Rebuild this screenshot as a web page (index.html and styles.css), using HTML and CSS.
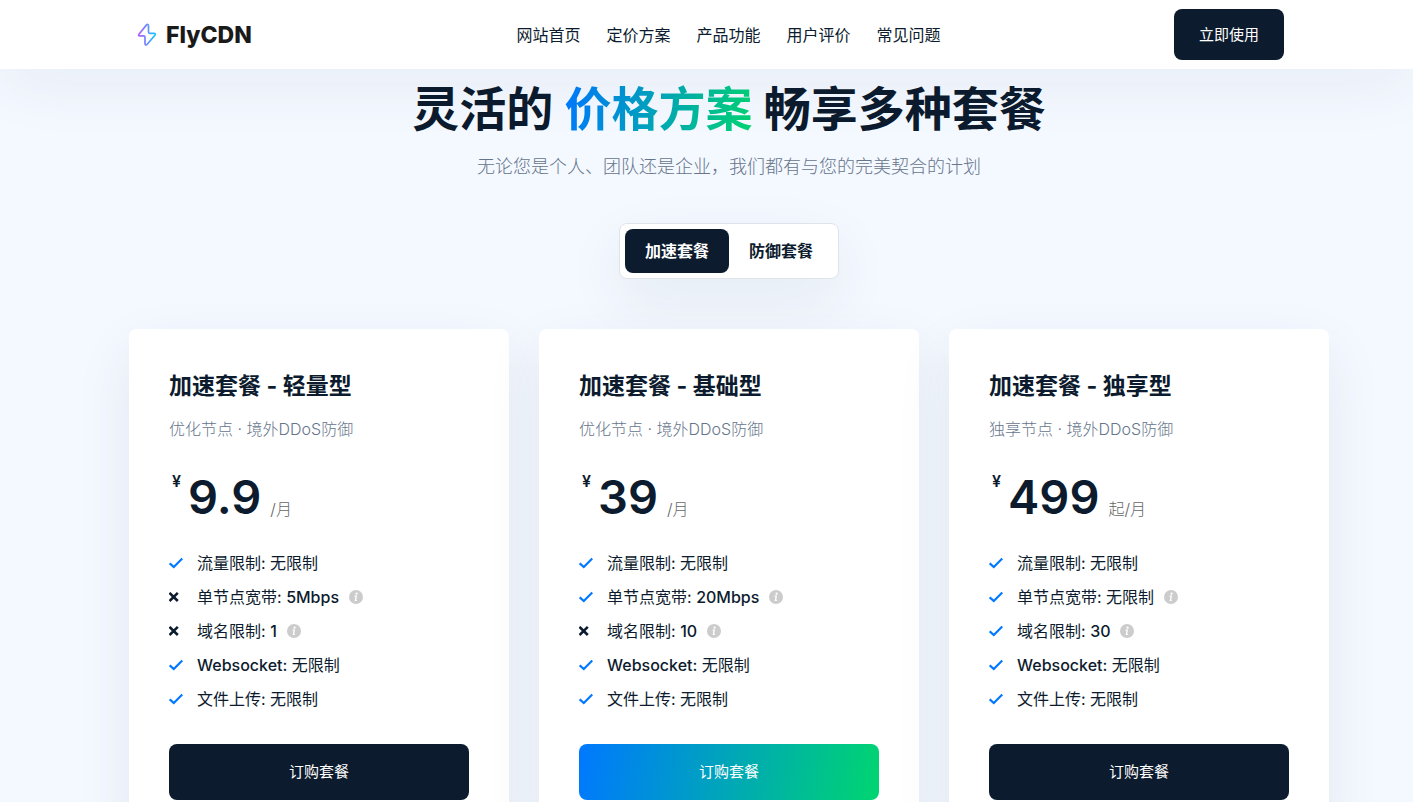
FILE: index.html
```html
<!DOCTYPE html>
<html lang="zh-CN">
<head>
<meta charset="utf-8">
<meta name="viewport" content="width=device-width, initial-scale=1">
<title>FlyCDN</title>
<link rel="stylesheet" href="styles.css">
</head>
<body>
<svg class="sprite" aria-hidden="true">
  <symbol id="check" viewBox="0 0 14 14"><path d="M.7 7.300 4.800 11 13.300 2.500" fill="none" stroke="currentColor" stroke-width="2.200"/></symbol>
  <symbol id="cross" viewBox="0 0 14 14"><path d="M.5 2.800 8.800 11M8.800 2.800.5 11" fill="none" stroke="currentColor" stroke-width="2.600"/></symbol>
  <symbol id="info" viewBox="0 0 14 14"><circle cx="7" cy="7" r="7" fill="#ccc"/><circle cx="7.600" cy="3.700" r="1.100" fill="#fff"/><path d="M5.600 6.100h1.700L6.400 10.400h1.500" fill="none" stroke="#fff" stroke-width="1.300"/></symbol>
</svg>
<header class="header">
  <a class="logo" href="#">
    <svg class="logo-mark" viewBox="0 0 20 24" aria-hidden="true">
      <defs><linearGradient id="bolt" x1="0" y1="0" x2="1" y2="0"><stop offset="0" stop-color="#b45cff"/><stop offset=".5" stop-color="#6b8cff"/><stop offset="1" stop-color="#10c8ff"/></linearGradient></defs>
      <path d="M9.3 2.1 2 11.2C1.3 12.200 1.500 12.900 2.700 12.900H6.600C7.600 12.900 8 13.300 8 14.200V20.500C8 22.300 9.200 22.500 10.200 21.300L17.900 12.200C18.600 11.200 18.200 10.300 17 10.300H12.800C11.900 10.300 11.500 9.900 11.500 9V2.900C11.500 1.300 10.300 1 9.300 2.100Z" fill="none" stroke="url(#bolt)" stroke-width="1.700"/>
    </svg>
    <span>FlyCDN</span>
  </a>
  <nav class="nav">
    <a href="#">网站首页</a>
    <a href="#">定价方案</a>
    <a href="#">产品功能</a>
    <a href="#">用户评价</a>
    <a href="#">常见问题</a>
  </nav>
  <div class="header-action"><a class="button start" href="#">立即使用</a></div>
</header>
<main class="pricing">
  <h1 class="title">灵活的 <span class="accent">价格方案</span> 畅享多种套餐</h1>
  <p class="lead">无论您是个人、团队还是企业，我们都有与您的完美契合的计划</p>
  <div class="tabs">
    <button class="tab active" type="button">加速套餐</button>
    <button class="tab" type="button">防御套餐</button>
  </div>
  <div class="plans">
    <section class="card">
      <h2 class="name">加速套餐 - 轻量型</h2>
      <p class="desc">优化节点 · 境外DDoS防御</p>
      <p class="price"><span class="currency">¥</span><span class="amount">9.9</span><span class="period">/月</span></p>
      <ul class="features">
        <li><svg class="icon yes"><use href="#check"/></svg><span>流量限制: 无限制</span></li>
        <li><svg class="icon"><use href="#cross"/></svg><span>单节点宽带: <b>5Mbps</b></span><svg class="icon info"><use href="#info"/></svg></li>
        <li><svg class="icon"><use href="#cross"/></svg><span>域名限制: <b>1</b></span><svg class="icon info"><use href="#info"/></svg></li>
        <li><svg class="icon yes"><use href="#check"/></svg><span><b>Websocket:</b> 无限制</span></li>
        <li><svg class="icon yes"><use href="#check"/></svg><span>文件上传: 无限制</span></li>
      </ul>
      <a class="button order" href="#">订购套餐</a>
    </section>
    <section class="card">
      <h2 class="name">加速套餐 - 基础型</h2>
      <p class="desc">优化节点 · 境外DDoS防御</p>
      <p class="price"><span class="currency">¥</span><span class="amount">39</span><span class="period">/月</span></p>
      <ul class="features">
        <li><svg class="icon yes"><use href="#check"/></svg><span>流量限制: 无限制</span></li>
        <li><svg class="icon yes"><use href="#check"/></svg><span>单节点宽带: <b>20Mbps</b></span><svg class="icon info"><use href="#info"/></svg></li>
        <li><svg class="icon"><use href="#cross"/></svg><span>域名限制: <b>10</b></span><svg class="icon info"><use href="#info"/></svg></li>
        <li><svg class="icon yes"><use href="#check"/></svg><span><b>Websocket:</b> 无限制</span></li>
        <li><svg class="icon yes"><use href="#check"/></svg><span>文件上传: 无限制</span></li>
      </ul>
      <a class="button order featured" href="#">订购套餐</a>
    </section>
    <section class="card">
      <h2 class="name">加速套餐 - 独享型</h2>
      <p class="desc">独享节点 · 境外DDoS防御</p>
      <p class="price"><span class="currency">¥</span><span class="amount">499</span><span class="period">起/月</span></p>
      <ul class="features">
        <li><svg class="icon yes"><use href="#check"/></svg><span>流量限制: 无限制</span></li>
        <li><svg class="icon yes"><use href="#check"/></svg><span>单节点宽带: 无限制</span><svg class="icon info"><use href="#info"/></svg></li>
        <li><svg class="icon yes"><use href="#check"/></svg><span>域名限制: <b>30</b></span><svg class="icon info"><use href="#info"/></svg></li>
        <li><svg class="icon yes"><use href="#check"/></svg><span><b>Websocket:</b> 无限制</span></li>
        <li><svg class="icon yes"><use href="#check"/></svg><span>文件上传: 无限制</span></li>
      </ul>
      <a class="button order" href="#">订购套餐</a>
    </section>
  </div>
</main>
</body>
</html>
```
FILE: styles.css
```css
:root {
  --ink: #0c1b2d;
  --muted: #66758c;
  --blue: #0078ff;
  --gradient: linear-gradient(100deg, #0078ff, #00d570);
  --shadow: 0 20px 60px rgba(12, 60, 90, 0.07);
}

* { box-sizing: border-box; }

body {
  margin: 0;
  background: #f4f8ff;
  color: var(--ink);
  font: 400 16px/24px Inter, "Noto Sans CJK SC", sans-serif;
}

h1, h2, p, ul { margin: 0; padding: 0; }
a { color: inherit; text-decoration: none; }
.sprite { display: none; }

.header {
  position: sticky;
  top: 0;
  z-index: 2;
  display: grid;
  grid-template-columns: 1fr auto 1fr;
  align-items: center;
  padding: 9px 129px 9px 137px;
  background: #fff;
  box-shadow: 0 20px 60px rgba(12, 60, 90, 0.05);
}

.logo {
  display: flex;
  align-items: center;
  gap: 9px;
  color: #1a1a1a;
  font-size: 23px;
  font-weight: 800;
}

.logo-mark { width: 20px; height: 24px; }
.nav { display: flex; gap: 26px; padding-left: 36px; }
.header-action { display: flex; justify-content: flex-end; }

.button {
  display: block;
  border-radius: 8px;
  background: var(--ink);
  color: #fff;
  font-size: 15px;
  text-align: center;
}

.start { padding: 14px 25px 13px; }
.order { padding: 16px; }
.featured { background: var(--gradient); }

.pricing {
  display: flex;
  flex-direction: column;
  align-items: center;
  padding: 10px 84px 60px 129px;
}

.title { font-size: 47px; font-weight: 700; line-height: 60px; }

.accent {
  background: var(--gradient);
  background-clip: text;
  -webkit-background-clip: text;
  color: transparent;
}

.lead {
  margin-top: 14px;
  color: var(--muted);
  font-size: 18px;
  font-weight: 300;
  line-height: 28px;
}

.tabs {
  display: flex;
  margin-top: 42px;
  padding: 5px;
  border: 1px solid #dfe4ea;
  border-radius: 8px;
  background: #fff;
  box-shadow: var(--shadow);
}

.tab {
  padding: 10px 20px;
  border: 0;
  border-radius: 8px;
  background: none;
  color: inherit;
  font: inherit;
  font-weight: 700;
}

.tab.active { background: var(--ink); color: #fff; }

.plans {
  display: grid;
  grid-template-columns: repeat(3, 1fr);
  gap: 30px;
  align-self: stretch;
  margin-top: 50px;
}

.card {
  padding: 40px;
  border-radius: 8px;
  background: #fff;
  box-shadow: var(--shadow);
}

.name { font-size: 23px; font-weight: 700; line-height: 34px; }
.desc { margin-top: 14px; color: var(--muted); font-weight: 300; }

.price { display: flex; margin-top: 28px; line-height: 56px; }
.currency { padding-left: 3px; font-weight: 600; line-height: 24px; }
.amount { margin-left: 7px; font-size: 47px; font-weight: 600; }
.period { align-self: flex-end; margin-left: 9px; color: #666; font-weight: 300; line-height: 32px; }

.features {
  display: grid;
  gap: 10px;
  margin: 26px 0 33px;
  list-style: none;
}

.features li { display: flex; align-items: center; gap: 14px; }
.features b { font-weight: 500; }
.icon { width: 14px; height: 14px; }
.yes { color: var(--blue); }
.info { margin-left: -4px; }
```
